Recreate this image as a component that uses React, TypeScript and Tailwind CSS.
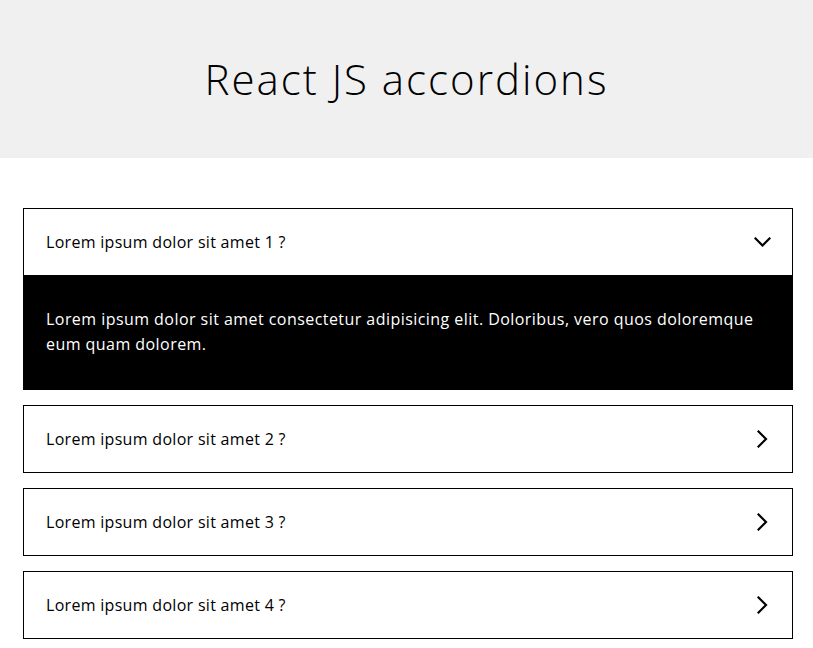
import React, { useState } from "react";

const items = [
  "Lorem ipsum dolor sit amet 1 ?",
  "Lorem ipsum dolor sit amet 2 ?",
  "Lorem ipsum dolor sit amet 3 ?",
  "Lorem ipsum dolor sit amet 4 ?",
];

function ChevronDown() {
  return (
    <svg width="17" height="10" viewBox="0 0 17 10" fill="none">
      <polyline points="1.5,1.5 8.5,8.5 15.5,1.5" stroke="#000" strokeWidth="2.2" strokeLinecap="square" />
    </svg>
  );
}

function ChevronRight() {
  return (
    <svg width="11" height="18" viewBox="0 0 11 18" fill="none">
      <polyline points="1.5,1.5 9,9 1.5,16.5" stroke="#000" strokeWidth="2.2" strokeLinecap="square" />
    </svg>
  );
}

export default function App() {
  const [open, setOpen] = useState<number | null>(0);
  return (
    <div className="min-h-[648px] bg-white text-black" style={{ fontFamily: '"Open Sans", sans-serif' }}>
      <header className="flex h-[158px] items-center justify-center bg-[#f0f0f0]">
        <h1 className="text-[42px] font-light leading-none tracking-[2px] text-black">React JS accordions</h1>
      </header>
      <div className="ml-[23px] mt-[50px] flex w-[770px] flex-col gap-[15px]">
        {items.map((q, i) => (
          <div key={i} className="border border-black">
            <button
              className="flex h-[66px] w-full items-center justify-between pl-[22px] pr-[21px] text-left text-[16px] tracking-[0.3px]"
              onClick={() => setOpen(open === i ? null : i)}
            >
              <span>{q}</span>
              <span className="flex w-[17px] items-center justify-center">
                {open === i ? <ChevronDown /> : <ChevronRight />}
              </span>
            </button>
            {open === i && (
              <div className="bg-black px-[22px] py-[32px] text-[16px] leading-[25px] tracking-[0.45px] text-white">
                Lorem ipsum dolor sit amet consectetur adipisicing elit. Doloribus, vero quos doloremque eum quam dolorem.
              </div>
            )}
          </div>
        ))}
      </div>
    </div>
  );
}
